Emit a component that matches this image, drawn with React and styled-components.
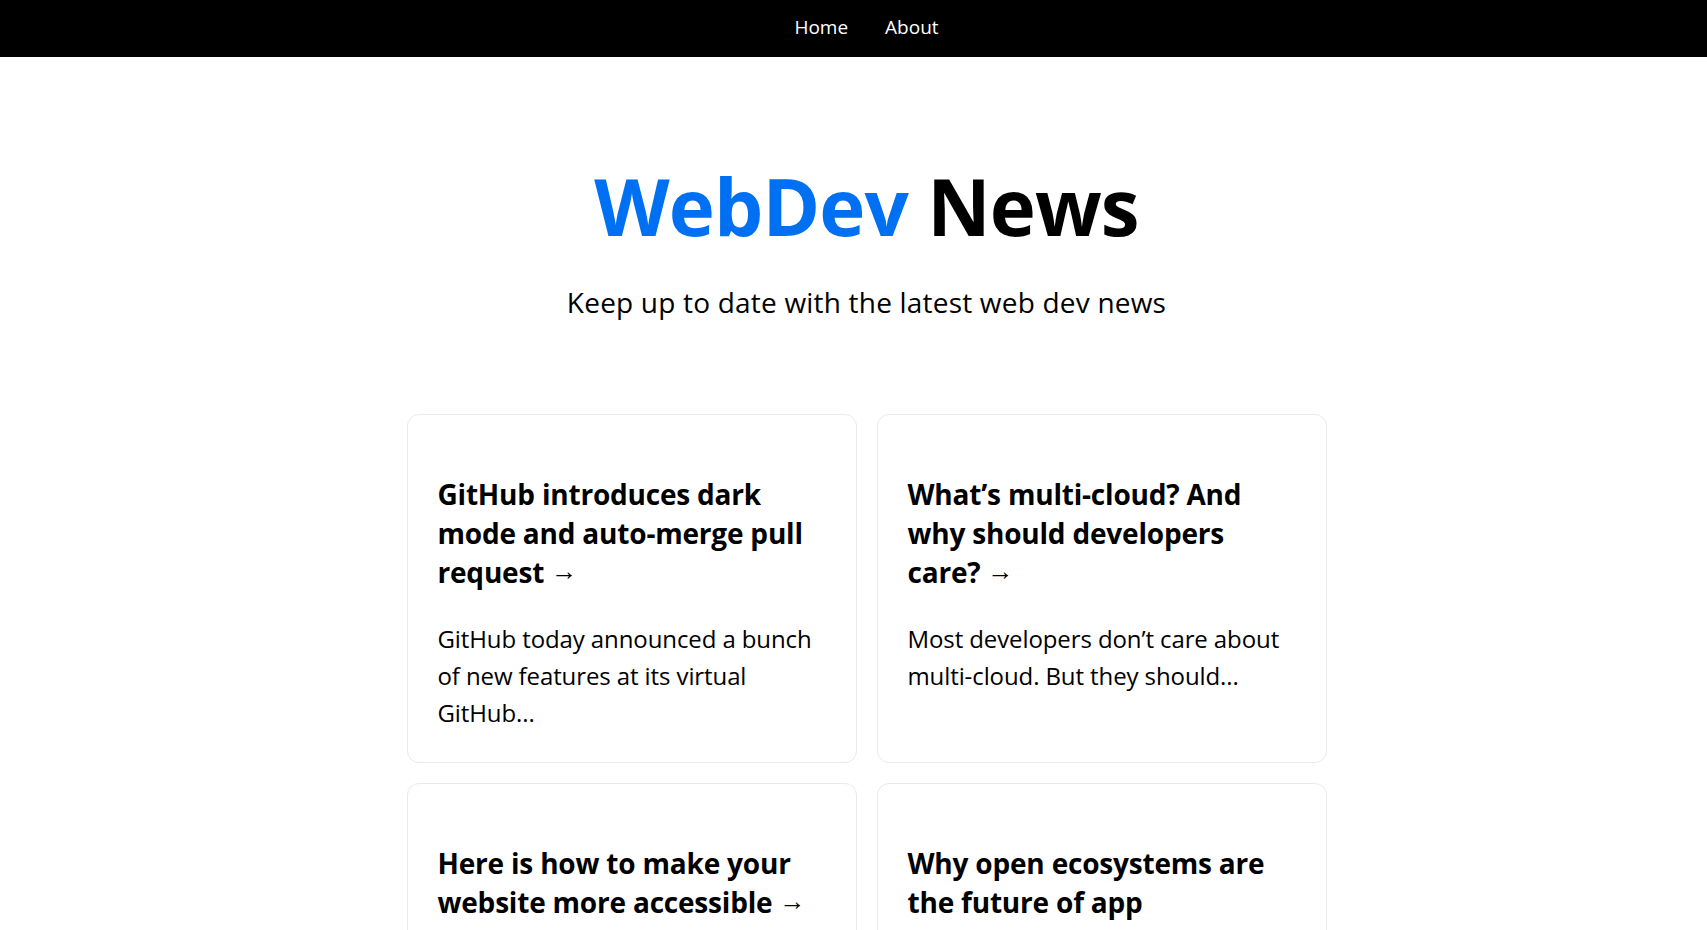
import React from "react";
import styled, { createGlobalStyle } from "styled-components";

const GlobalStyle = createGlobalStyle`
  * { box-sizing: border-box; }
  html, body {
    margin: 0;
    padding: 0;
    background: #fff;
    color: #000;
    font-family: "Open Sans", "Noto Sans", sans-serif;
  }
  a { color: inherit; text-decoration: none; }
`;

const Page = styled.div`
  min-height: 100vh;
`;

const Nav = styled.nav`
  height: 57px;
  background: #000;
  display: flex;
  justify-content: center;
  align-items: center;
  padding: 0 0 2px 26px;
  gap: 37px;
`;

const NavLink = styled.a`
  color: #fff;
  font-size: 19px;
  line-height: 1;
`;

const Main = styled.main`
  padding: 103px 0 60px 26px;
  display: flex;
  flex-direction: column;
  align-items: center;
`;

const Title = styled.h1`
  margin: 0;
  font-size: 78px;
  line-height: 92px;
  font-weight: 700;
  letter-spacing: -0.9px;
  text-align: center;
`;

const Accent = styled.span`
  color: #0070f3;
`;

const Description = styled.p`
  margin: 29px 0 0;
  font-size: 28px;
  line-height: 42px;
  letter-spacing: 0.2px;
  text-align: center;
`;

const Grid = styled.div`
  margin-top: 91px;
  display: grid;
  grid-template-columns: repeat(2, 450px);
  gap: 20px;
`;

const Card = styled.a`
  display: block;
  padding: 30px 30px 31px;
  border: 1px solid #eaeaea;
  border-radius: 12px;
  color: inherit;
`;

const CardTitle = styled.h3`
  margin: 30px 0 28px;
  font-size: 28px;
  line-height: 39px;
  font-weight: 700;
  letter-spacing: -0.2px;
`;

const Arrow = styled.span`
  font-family: "Liberation Sans", "DejaVu Sans", sans-serif;
  font-weight: 400;
  font-size: 26px;
  line-height: 0;
  letter-spacing: 0;
  vertical-align: 3px;
`;

const CardText = styled.p`
  margin: 0;
  font-size: 24px;
  line-height: 37px;
  letter-spacing: -0.1px;
`;

const articles = [
  {
    title: "GitHub introduces dark mode and auto-merge pull request",
    text: "GitHub today announced a bunch of new features at its virtual GitHub...",
  },
  {
    title: "What\u2019s multi-cloud? And why should developers care?",
    text: "Most developers don\u2019t care about multi-cloud. But they should...",
  },
  {
    title: "Here is how to make your website more accessible",
    text: "Accessibility matters. Here are a few simple steps to make...",
  },
  {
    title: "Why open ecosystems are the future of app development",
    text: "Open ecosystems give developers more choice and more freedom...",
  },
];

export default function App() {
  return (
    <Page>
      <GlobalStyle />
      <Nav>
        <NavLink href="#">Home</NavLink>
        <NavLink href="#">About</NavLink>
      </Nav>
      <Main>
        <Title>
          <Accent>WebDev</Accent> News
        </Title>
        <Description>Keep up to date with the latest web dev news</Description>
        <Grid>
          {articles.map((a) => (
            <Card href="#" key={a.title}>
              <CardTitle>
                {a.title} <Arrow>&rarr;</Arrow>
              </CardTitle>
              <CardText>{a.text}</CardText>
            </Card>
          ))}
        </Grid>
      </Main>
    </Page>
  );
}
